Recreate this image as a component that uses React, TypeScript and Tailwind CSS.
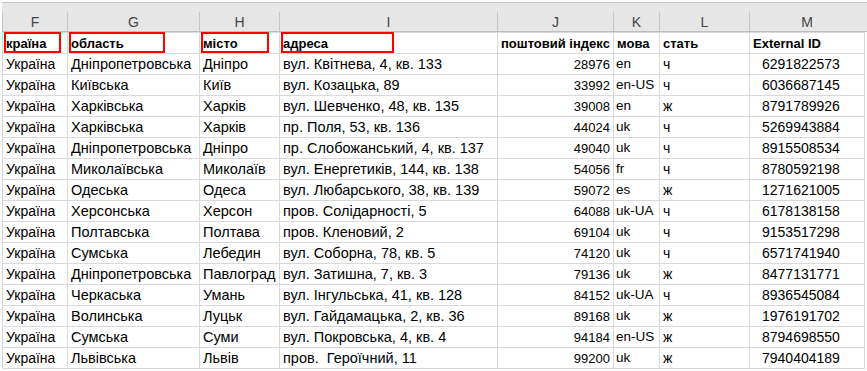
const cols = [
  { letter: "F", w: 65 },
  { letter: "G", w: 132 },
  { letter: "H", w: 80 },
  { letter: "I", w: 218 },
  { letter: "J", w: 116 },
  { letter: "K", w: 46 },
  { letter: "L", w: 90 },
  { letter: "M", w: 115 },
];

const rows: string[][] = [
  ["Україна", "Дніпропетровська", "Дніпро", "вул. Квітнева, 4, кв. 133", "28976", "en", "ч", "6291822573"],
  ["Україна", "Київська", "Київ", "вул. Козацька, 89", "33992", "en-US", "ч", "6036687145"],
  ["Україна", "Харківська", "Харків", "вул. Шевченко, 48, кв. 135", "39008", "en", "ж", "8791789926"],
  ["Україна", "Харківська", "Харків", "пр. Поля, 53, кв. 136", "44024", "uk", "ч", "5269943884"],
  ["Україна", "Дніпропетровська", "Дніпро", "пр. Слобожанський, 4, кв. 137", "49040", "uk", "ч", "8915508534"],
  ["Україна", "Миколаївська", "Миколаїв", "вул. Енергетиків, 144, кв. 138", "54056", "fr", "ч", "8780592198"],
  ["Україна", "Одеська", "Одеса", "вул. Любарського, 38, кв. 139", "59072", "es", "ж", "1271621005"],
  ["Україна", "Херсонська", "Херсон", "пров. Солідарності, 5", "64088", "uk-UA", "ч", "6178138158"],
  ["Україна", "Полтавська", "Полтава", "пров. Кленовий, 2", "69104", "uk", "ч", "9153517298"],
  ["Україна", "Сумська", "Лебедин", "вул. Соборна, 78, кв. 5", "74120", "uk", "ч", "6571741940"],
  ["Україна", "Дніпропетровська", "Павлоград", "вул. Затишна, 7, кв. 3", "79136", "uk", "ж", "8477131771"],
  ["Україна", "Черкаська", "Умань", "вул. Інгульська, 41, кв. 128", "84152", "uk-UA", "ч", "8936545084"],
  ["Україна", "Волинська", "Луцьк", "вул. Гайдамацька, 2, кв. 36", "89168", "uk", "ж", "1976191702"],
  ["Україна", "Сумська", "Суми", "вул. Покровська, 4, кв. 4", "94184", "en-US", "ж", "8794698550"],
  ["Україна", "Львівська", "Львів", "пров.  Героїчний, 11", "99200", "uk", "ж", "7940404189"],
];

const headers = ["країна", "область", "місто", "адреса", "поштовий індекс", "мова", "стать", "External ID"];
// header cells that carry the red highlight box, with box width
const boxed: Record<number, number> = { 0: 57, 1: 96, 2: 68, 3: 113 };

const cellBase = "border border-[#d9d9d9] p-0 whitespace-pre";
const dataCell = [
  `${cellBase} pl-[3px] text-[14px]`,
  `${cellBase} pl-[3px] text-[14.5px]`,
  `${cellBase} pl-[3px] text-[14.5px]`,
  `${cellBase} pl-[3px] text-[14.5px]`,
  `${cellBase} pr-[3px] text-right text-[13px]`,
  `${cellBase} pl-[2px] text-[13.5px]`,
  `${cellBase} pl-[3px] text-[14px]`,
  `${cellBase} pl-[12px] text-[14px]`,
];

function ColumnLetters() {
  return (
    <div className="flex h-[30px] border-t border-[#c6c6c6] bg-[#e6e6e6] border-b border-b-[#bdbdbd]">
      {cols.map((c) => (
        <div key={c.letter} className="flex h-full flex-col justify-end" style={{ width: c.w }}>
          <div className="flex h-[19px] items-center justify-center border-l border-[#c6c6c6] text-[14px] text-[#444]">
            {c.letter}
          </div>
        </div>
      ))}
    </div>
  );
}

function HeaderRow() {
  return (
    <tr className="h-[21px]">
      {headers.map((h, i) => (
        <td key={h} className="relative border border-[#d9d9d9] p-0 text-[13px] font-bold">
          {boxed[i] !== undefined ? (
            <div
              className="absolute left-[1px] top-[-1px] h-[21px] border-2 border-[#ff0000]"
              style={{ width: boxed[i] }}
            />
          ) : null}
          <span className="relative pl-[3px] whitespace-nowrap">{h}</span>
        </td>
      ))}
    </tr>
  );
}

function DataRow({ r }: { r: string[] }) {
  return (
    <tr className="h-[21px]">
      {r.map((v, i) => (
        <td key={i} className={dataCell[i]}>
          {v}
        </td>
      ))}
    </tr>
  );
}

export default function App() {
  return (
    <div className="h-[371px] w-[867px] overflow-hidden bg-white pl-[2px] pt-[2px] font-['Liberation_Sans',Arial,sans-serif] leading-none text-black">
      <ColumnLetters />
      <table className="table-fixed border-collapse">
        <colgroup>
          {cols.map((c) => (
            <col key={c.letter} style={{ width: c.w }} />
          ))}
        </colgroup>
        <tbody>
          <HeaderRow />
          {rows.map((r, i) => (
            <DataRow key={i} r={r} />
          ))}
        </tbody>
      </table>
    </div>
  );
}
